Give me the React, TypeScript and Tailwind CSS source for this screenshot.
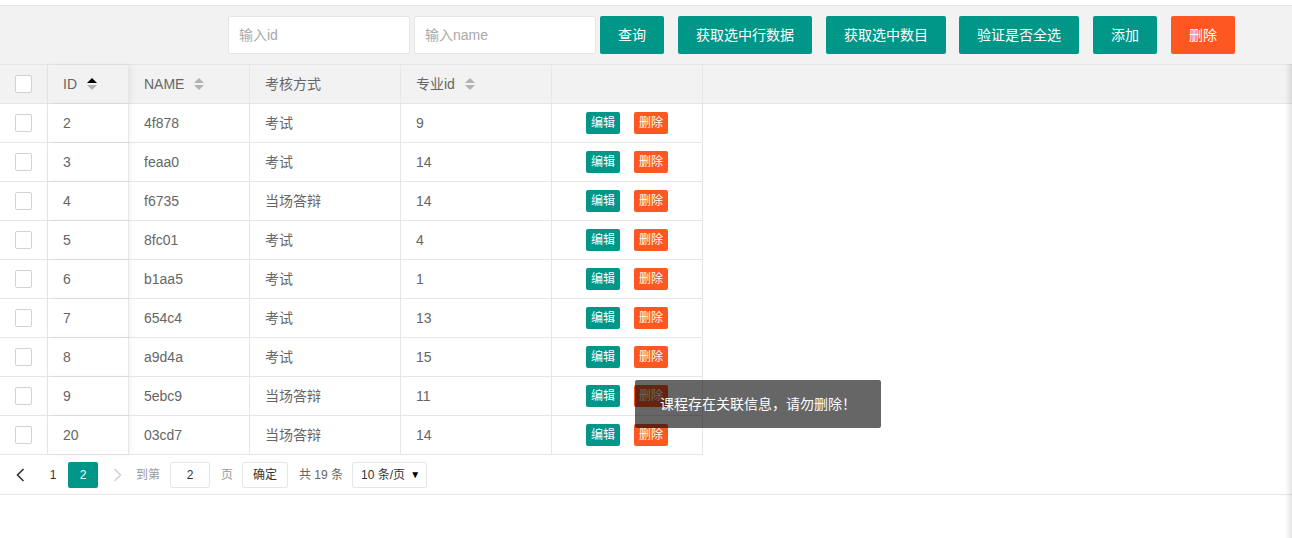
import React from 'react'

const rows = [
  { id: 2, name: '4f878', way: '考试', major: 9 },
  { id: 3, name: 'feaa0', way: '考试', major: 14 },
  { id: 4, name: 'f6735', way: '当场答辩', major: 14 },
  { id: 5, name: '8fc01', way: '考试', major: 4 },
  { id: 6, name: 'b1aa5', way: '考试', major: 1 },
  { id: 7, name: '654c4', way: '考试', major: 13 },
  { id: 8, name: 'a9d4a', way: '考试', major: 15 },
  { id: 9, name: '5ebc9', way: '当场答辩', major: 11 },
  { id: 20, name: '03cd7', way: '当场答辩', major: 14 },
]

const font = { fontFamily: '"Liberation Sans", "Noto Sans CJK SC", sans-serif' }

function SortIcon({ active }: { active?: boolean }) {
  return (
    <span className="ml-[10px] inline-flex flex-col gap-[2px]">
      <span
        className={`h-0 w-0 border-x-[5px] border-b-[5px] border-x-transparent ${
          active ? 'border-b-black' : 'border-b-[#b2b2b2]'
        }`}
      />
      <span className="h-0 w-0 border-x-[5px] border-t-[5px] border-x-transparent border-t-[#b2b2b2]" />
    </span>
  )
}

function Checkbox() {
  return <span className="block h-[18px] w-[18px] rounded-[2px] border border-[#d2d2d2] bg-white" />
}

function ToolButton({ label, danger, className = '' }: { label: string; danger?: boolean; className?: string }) {
  return (
    <button
      className={`h-[38px] rounded-[2px] px-[18px] text-[14px] text-white ${
        danger ? 'bg-[#ff5722]' : 'bg-[#009688]'
      } ${className}`}
    >
      {label}
    </button>
  )
}

const cellBase = 'flex items-center border-r border-[#e6e6e6] px-[15px]'

export default function App() {
  return (
    <div className="relative h-[538px] w-[1292px] overflow-hidden bg-white text-[14px] text-[#666]" style={font}>
      <div className="mt-[5px] flex items-center border-t border-[#e6e6e6] bg-[#f2f2f2] py-[10px] pl-[228px]">
        <input
          placeholder="输入id"
          className="h-[38px] w-[182px] rounded-[2px] border border-[#e6e6e6] bg-white pl-[10px] text-[14px] outline-none placeholder:text-[#aaa]"
        />
        <input
          placeholder="输入name"
          className="ml-[4px] h-[38px] w-[182px] rounded-[2px] border border-[#e6e6e6] bg-white pl-[10px] text-[14px] outline-none placeholder:text-[#aaa]"
        />
        <div className="ml-[4px] flex items-center gap-[14px]">
          <ToolButton label="查询" />
          <ToolButton label="获取选中行数据" />
          <ToolButton label="获取选中数目" />
          <ToolButton label="验证是否全选" className="-ml-[1px]" />
          <ToolButton label="添加" />
          <ToolButton label="删除" danger />
        </div>
      </div>

      <div className="flex h-[40px] border-y border-[#e6e6e6] bg-[#f2f2f2]">
        <div className={`${cellBase} w-[48px] px-[14px]`}>
          <Checkbox />
        </div>
        <div className={`${cellBase} relative z-10 w-[81px] shadow-[2px_0_6px_rgba(0,0,0,0.06)]`}>
          ID
          <SortIcon active />
        </div>
        <div className={`${cellBase} w-[121px]`}>
          NAME
          <SortIcon />
        </div>
        <div className={`${cellBase} w-[151px]`}>考核方式</div>
        <div className={`${cellBase} w-[151px]`}>
          专业id
          <SortIcon />
        </div>
        <div className={`${cellBase} w-[151px]`} />
        <div className="flex-1" />
      </div>

      <div className="w-[703px]">
        {rows.map((r) => (
          <div key={r.id} className="flex h-[39px] border-b border-[#e6e6e6]">
            <div className={`${cellBase} w-[48px] px-[14px]`}>
              <Checkbox />
            </div>
            <div className={`${cellBase} relative z-10 w-[81px] bg-white shadow-[2px_0_6px_rgba(0,0,0,0.05)]`}>{r.id}</div>
            <div className={`${cellBase} w-[121px]`}>{r.name}</div>
            <div className={`${cellBase} w-[151px]`}>{r.way}</div>
            <div className={`${cellBase} w-[151px]`}>{r.major}</div>
            <div className={`${cellBase} w-[151px] justify-center gap-[14px]`}>
              <button className="h-[22px] rounded-[2px] bg-[#009688] px-[5px] text-[12px] text-white">编辑</button>
              <button className="h-[22px] rounded-[2px] bg-[#ff5722] px-[5px] text-[12px] text-white">删除</button>
            </div>
          </div>
        ))}
      </div>

      <div className="flex h-[40px] items-center border-b border-[#e6e6e6] pl-[5px] text-[12px]">
        <span className="flex h-[26px] w-[30px] items-center justify-center text-[#333]">
          <svg width="9" height="14" viewBox="0 0 9 14" fill="none" stroke="currentColor" strokeWidth="1.6">
            <path d="M7.5 1 L1.5 7 L7.5 13" />
          </svg>
        </span>
        <span className="ml-[3px] flex h-[26px] w-[30px] items-center justify-center text-[#333]">1</span>
        <span className="flex h-[26px] w-[30px] items-center justify-center rounded-[2px] bg-[#009688] text-white">2</span>
        <span className="ml-[4px] flex h-[26px] w-[30px] items-center justify-center text-[#d2d2d2]">
          <svg width="9" height="14" viewBox="0 0 9 14" fill="none" stroke="currentColor" strokeWidth="1.6">
            <path d="M1.5 1 L7.5 7 L1.5 13" />
          </svg>
        </span>
        <span className="ml-[4px] text-[#999]">到第</span>
        <span className="ml-[10px] flex h-[26px] w-[40px] items-center justify-center rounded-[2px] border border-[#e6e6e6] text-[#333]">2</span>
        <span className="ml-[11px] text-[#999]">页</span>
        <span className="ml-[9px] flex h-[26px] w-[46px] items-center justify-center rounded-[2px] border border-[#e6e6e6] text-[#333]">确定</span>
        <span className="ml-[11px] text-[#666]">共 19 条</span>
        <span className="ml-[9px] flex h-[26px] w-[75px] items-center justify-between rounded-[2px] border border-[#e6e6e6] pl-[8px] pr-[6px] text-[#333]">
          10 条/页
          <span className="text-[10px] text-black">▼</span>
        </span>
      </div>

      <div className="absolute bottom-0 right-0 top-[64px] w-[7px] bg-gradient-to-r from-transparent to-black/10" />

      <div className="absolute left-[635px] top-[380px] flex h-[48px] w-[246px] items-center justify-center rounded-[2px] bg-black/60 text-[14px] text-white">
        课程存在关联信息，请勿删除！
      </div>
    </div>
  )
}
